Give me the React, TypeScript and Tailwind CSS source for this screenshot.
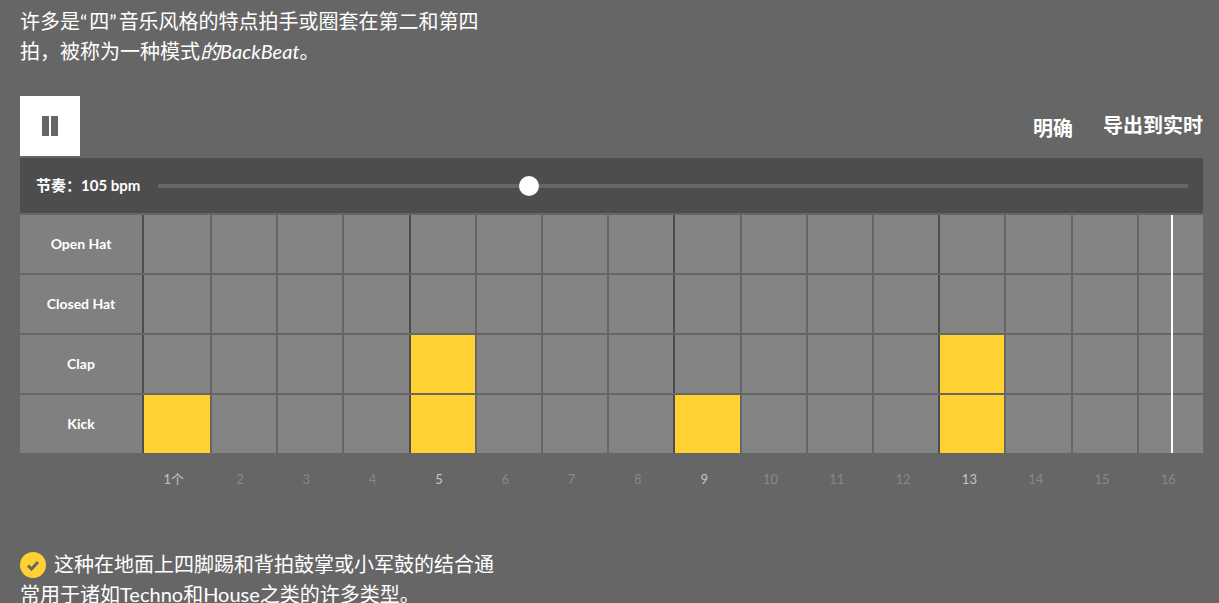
const CJK = "font-['Lato','Noto_Sans_CJK_SC',sans-serif]";

const TRACKS: { name: string; steps: number[] }[] = [
  { name: "Open Hat", steps: [] },
  { name: "Closed Hat", steps: [] },
  { name: "Clap", steps: [4, 12] },
  { name: "Kick", steps: [0, 4, 8, 12] },
];

const LABELS = ["1个", "2", "3", "4", "5", "6", "7", "8", "9", "10", "11", "12", "13", "14", "15", "16"];

function Row({ name, steps }: { name: string; steps: number[] }) {
  return (
    <div className="grid grid-cols-[122px_68px_repeat(15,1fr)] h-[60px] border-t-2 border-[#666666]">
      <div className="flex items-center justify-center bg-[#808080] pb-[2px] text-[14px] font-bold text-white">{name}</div>
      {LABELS.map((_, i) => (
        <div
          key={i}
          className={
            "border-l-2 " +
            (i % 4 === 0 ? "border-[#4d4d4d] " : "border-[#666666] ") +
            (steps.includes(i) ? "bg-[#ffd133]" : "bg-[#848484]")
          }
        />
      ))}
    </div>
  );
}

export default function App() {
  return (
    <div className={`h-screen overflow-hidden bg-[#666666] pl-5 pr-4 text-white ${CJK}`}>
      <p className="w-[470px] pt-[6px] text-[20px] font-normal leading-[30px]">
        许多是<span className="tracking-[2px]">“</span>四<span className="tracking-[2px]">”</span>音乐风格的特点拍手或圈套在第二和第四
        <br />
        拍，被称为一种模式<em>的BackBeat</em>。
      </p>

      <div className="mt-[30px] flex items-center justify-between">
        <button className="flex h-[60px] w-[60px] items-center justify-center bg-white">
          <svg viewBox="0 0 16 20" className="h-5 w-4">
            <rect x="0" y="0" width="7" height="20" fill="#666666" />
            <rect x="9" y="0" width="7" height="20" fill="#666666" />
          </svg>
        </button>
        <div className="flex gap-[30px] text-[20px] font-bold">
          <span className="pt-[3px]">明确</span>
          <span>导出到实时</span>
        </div>
      </div>

      <div className="relative mt-[2px]">
        <div className="flex h-[55px] items-center bg-[#4d4d4d] pl-[16px] pr-[15px]">
          <span className="w-[122px] text-[15px] font-bold">节奏：105 bpm</span>
          <div className="relative h-1 flex-1 bg-[#666666]">
            <div className="absolute left-[361px] top-[-8px] h-5 w-5 rounded-full bg-white" />
          </div>
        </div>
        {TRACKS.map((t) => (
          <Row key={t.name} name={t.name} steps={t.steps} />
        ))}
        <div className="absolute bottom-0 left-[1151px] top-[57px] w-[2px] bg-white" />
      </div>

      <div className="mt-[17px] grid grid-cols-[122px_repeat(16,1fr)] text-[13px]">
        <div />
        {LABELS.map((l, i) => (
          <div key={l} className={"pr-[3px] text-center " + (i % 4 === 0 ? "text-[#c4c4c4]" : "text-[#888888]")}>
            {l}
          </div>
        ))}
      </div>

      <p className="mt-[59px] w-[480px] text-[20px] font-normal leading-[30px]">
        <svg viewBox="0 0 26 26" className="mr-[8px] inline-block h-[26px] w-[26px] align-[-6px]">
          <circle cx="13" cy="13" r="13" fill="#ffd133" />
          <path d="M8 13.5l3.5 3.5 6.5-7" fill="none" stroke="#666666" strokeWidth="3" />
        </svg>
        这种在地面上四脚踢和背拍鼓掌或小军鼓的结合通
        <br />
        常用于诸如Techno和House之类的许多类型。
      </p>
    </div>
  );
}
